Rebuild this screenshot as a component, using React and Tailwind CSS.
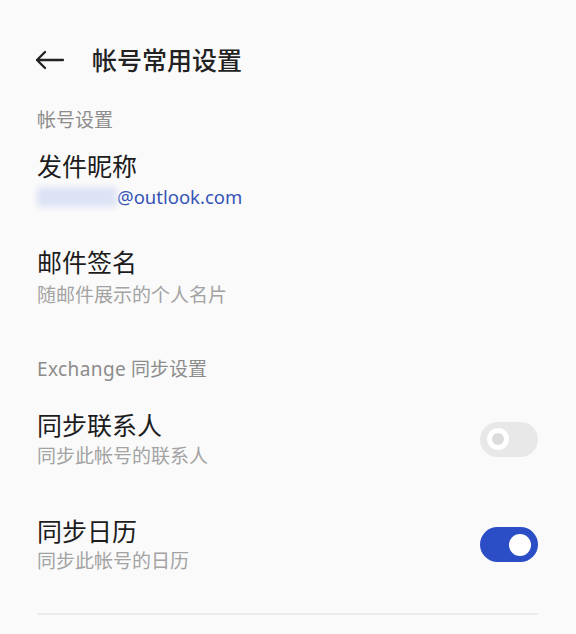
import React from "react";

const cjk = { fontFamily: '"Noto Sans", "Noto Sans CJK SC", sans-serif' };

function Toggle({ on }) {
  if (on) {
    return (
      <div className="relative w-[58px] h-[35px] rounded-full bg-[#2b4ec6] shrink-0">
        <div className="absolute right-[7px] top-[6.5px] w-[22px] h-[22px] rounded-full bg-white" />
      </div>
    );
  }
  return (
    <div className="relative w-[58px] h-[35px] rounded-full bg-[#e8e8e8] shrink-0">
      <div className="absolute left-[7px] top-[6.5px] w-[22px] h-[22px] rounded-full bg-white flex items-center justify-center">
        <div className="w-[12px] h-[12px] rounded-full bg-[#dcdcdc]" />
      </div>
    </div>
  );
}

export default function App() {
  return (
    <div className="w-[576px] h-[634px] bg-[#fafafa] overflow-hidden" style={cjk}>
      <div className="pl-[37px] pr-[38px]">
        {/* Header */}
        <div className="mt-[44px] h-[32px] flex items-center">
          <svg width="30" height="20" viewBox="0 0 30 20" className="-ml-[2px] shrink-0">
            <path d="M2 10 H28 M10 2 L2 10 L10 18" fill="none" stroke="#222" strokeWidth="2.3" strokeLinecap="round" strokeLinejoin="round" />
          </svg>
          <div className="ml-[27px] text-[25px] leading-[32px] text-[#222] font-medium">帐号常用设置</div>
        </div>

        {/* Section */}
        <div className="mt-[32px] text-[19px] leading-[24px] text-[#8c8c8c]">帐号设置</div>

        <div className="mt-[19px] text-[25px] leading-[30px] text-[#1c1c1c]">发件昵称</div>
        <div className="mt-[4px] text-[18.5px] leading-[24px] flex items-center">
          <span className="w-[80px] h-[20px] rounded-sm bg-[#dde3f5] blur-[3px] inline-block" />
          <span className="text-[#3553b5]">@outlook.com</span>
        </div>

        <div className="mt-[38px] text-[25px] leading-[30px] text-[#1c1c1c]">邮件签名</div>
        <div className="mt-[6px] text-[19px] leading-[24px] text-[#a3a3a3]">随邮件展示的个人名片</div>

        <div className="mt-[50px] text-[19px] leading-[24px] text-[#8c8c8c]">
          <span className="tracking-[0.4px]">Exchange</span> 同步设置
        </div>

        <div className="mt-[29px] flex items-center justify-between">
          <div>
            <div className="text-[25px] leading-[30px] text-[#1c1c1c]">同步联系人</div>
            <div className="mt-[4px] text-[19px] leading-[24px] text-[#a3a3a3]">同步此帐号的联系人</div>
          </div>
          <Toggle on={false} />
        </div>

        <div className="mt-[48px] flex items-center justify-between">
          <div>
            <div className="text-[25px] leading-[30px] text-[#1c1c1c]">同步日历</div>
            <div className="mt-[3px] text-[19px] leading-[24px] text-[#a3a3a3]">同步此帐号的日历</div>
          </div>
          <Toggle on={true} />
        </div>

        <div className="mt-[40px] h-[2px] bg-[#ececec]" />
      </div>
    </div>
  );
}
